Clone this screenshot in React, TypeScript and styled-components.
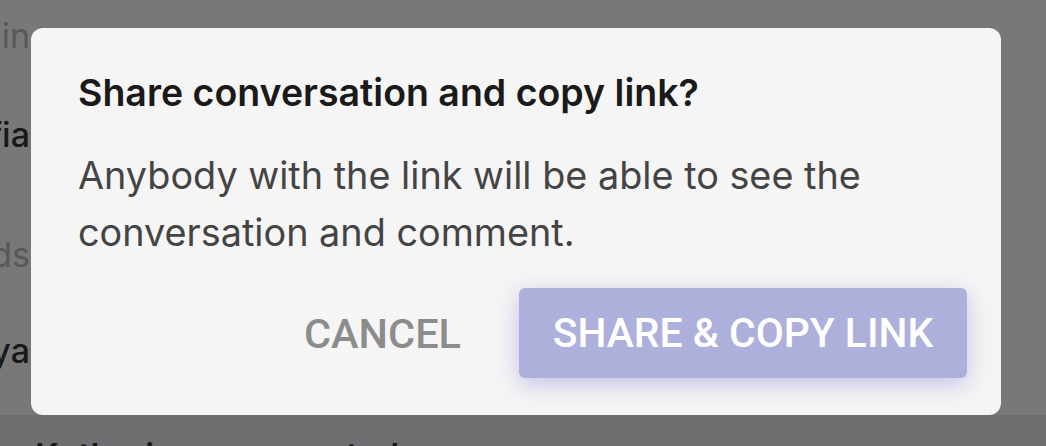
import React from "react";
import styled, { createGlobalStyle } from "styled-components";

const Global = createGlobalStyle`
  html, body { margin: 0; padding: 0; }
  body { width: 1046px; height: 446px; overflow: hidden; background: #f0f0f0; font-family: "Inter", "Noto Sans", sans-serif; }
  #root { width: 1046px; height: 446px; }
`;

const Page = styled.div`
  position: relative;
  width: 1046px;
  height: 446px;
  overflow: hidden;
  background: #f0f0f0;
  display: flex;
  flex-direction: column;
`;

const List = styled.div`
  flex: 1;
  display: flex;
  flex-direction: column;
  padding-top: 16px;
`;

const Row = styled.div<{ $h: number }>`
  height: ${(p) => p.$h}px;
  width: 30px;
  display: flex;
  justify-content: flex-end;
  align-items: flex-start;
  overflow: hidden;
  white-space: nowrap;
`;

const BgText = styled.span<{ $muted?: boolean }>`
  font-family: "Inter", "Noto Sans", sans-serif;
  font-size: 34px;
  line-height: 40px;
  color: ${(p) => (p.$muted ? "#b0b0b0" : "#333333")};
  font-weight: ${(p) => (p.$muted ? 400 : 500)};
`;

const Footer = styled.div`
  height: 31px;
  background: #dcdce0;
  padding-left: 35px;
  display: flex;
  align-items: flex-start;
  overflow: hidden;
`;

const FooterText = styled.span`
  font-family: "Inter", "Noto Sans", sans-serif;
  font-size: 34px;
  font-weight: 600;
  color: #333333;
  margin-top: 21px;
  line-height: 40px;
  white-space: nowrap;
  flex-shrink: 0;
`;

const Overlay = styled.div`
  position: absolute;
  inset: 0;
  background: rgba(0, 0, 0, 0.5);
  display: flex;
  align-items: flex-start;
  justify-content: flex-start;
  padding: 28px 0 0 31px;
  box-sizing: border-box;
`;

const Dialog = styled.div`
  width: 970px;
  height: 387px;
  box-sizing: border-box;
  background: #f5f5f5;
  border-radius: 12px;
  padding: 0 34px 37px 47px;
  display: flex;
  flex-direction: column;
`;

const Title = styled.h2`
  margin: 0;
  padding-top: 43px;
  font-family: "Inter", "Noto Sans", sans-serif;
  font-weight: 600;
  font-size: 37.5px;
  line-height: 44px;
  color: #1a1a1a;
`;

const Body = styled.p`
  margin: 32px 0 0;
  font-family: "Inter", "Noto Sans", sans-serif;
  font-weight: 400;
  font-size: 37.8px;
  line-height: 57px;
  color: #444444;
`;

const Actions = styled.div`
  margin-top: auto;
  display: flex;
  justify-content: flex-end;
  align-items: center;
  gap: 30px;
`;

const TextButton = styled.button`
  border: none;
  background: transparent;
  font-family: "Roboto", sans-serif;
  font-weight: 500;
  font-size: 41.5px;
  color: #8c8c8c;
  padding: 0 28px;
  height: 90px;
  cursor: pointer;
`;

const PrimaryButton = styled.button`
  border: none;
  width: 448px;
  height: 90px;
  border-radius: 6px;
  background: #aeb0dc;
  color: #ffffff;
  font-family: "Roboto", sans-serif;
  font-weight: 500;
  font-size: 40.8px;
  box-shadow: 0 6px 22px rgba(130, 130, 220, 0.45);
  cursor: pointer;
`;

export default function App() {
  return (
    <>
      <Global />
      <Page>
        <List>
          <Row $h={99}><BgText $muted>Trips in</BgText></Row>
          <Row $h={120}><BgText>Sofia</BgText></Row>
          <Row $h={96}><BgText $muted>Friends</BgText></Row>
          <Row $h={84}><BgText>Maya</BgText></Row>
        </List>
        <Footer>
          <FooterText>Katherine commented on your message</FooterText>
        </Footer>
        <Overlay>
          <Dialog role="dialog" aria-modal="true">
            <Title>Share conversation and copy link?</Title>
            <Body>Anybody with the link will be able to see the conversation and comment.</Body>
            <Actions>
              <TextButton>CANCEL</TextButton>
              <PrimaryButton>SHARE &amp; COPY LINK</PrimaryButton>
            </Actions>
          </Dialog>
        </Overlay>
      </Page>
    </>
  );
}
